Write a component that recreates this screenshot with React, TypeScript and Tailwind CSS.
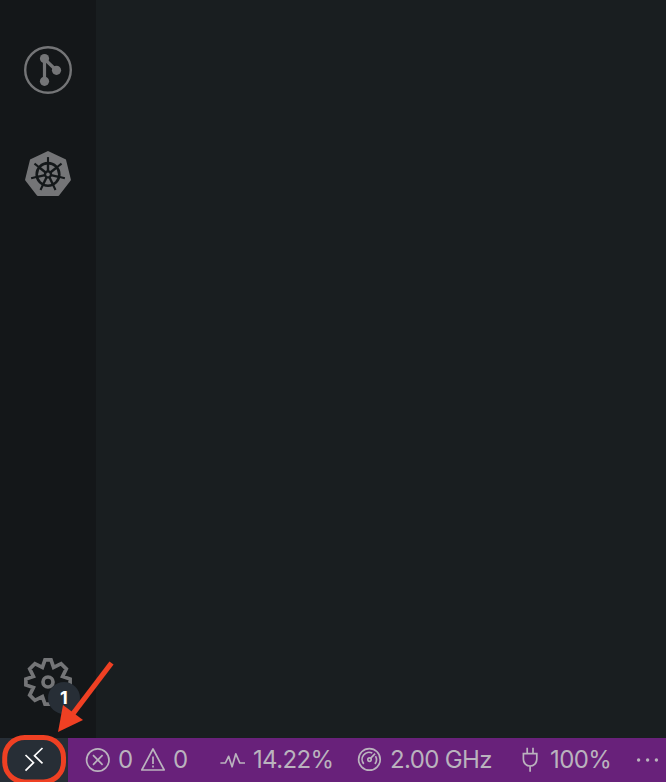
import type { ReactNode } from 'react';

const SPOKES = [0, 1, 2, 3, 4, 5, 6].map((i) => (i * 360) / 7);

function GraphIcon() {
  return (
    <svg width="48" height="48" viewBox="0 0 48 48" fill="none" stroke="#747577">
      <circle cx="24" cy="24" r="22.8" strokeWidth="2.4" />
      <path d="M20.5 13v22.5M20.5 13l12 11.5" strokeWidth="3.2" />
      <g fill="#747577" stroke="none">
        <circle cx="20.5" cy="12.5" r="4.6" />
        <circle cx="20.5" cy="35.3" r="4.6" />
        <circle cx="32.5" cy="24.3" r="4.6" />
      </g>
    </svg>
  );
}

function KubernetesIcon() {
  return (
    <svg width="48" height="48" viewBox="0 0 48 48">
      <path
        d="M24 2.2L41 10.3L45.8 29.8L34.2 44.8H13.8L2.2 29.8L7 10.3Z"
        fill="#747577"
        stroke="#747577"
        strokeWidth="2.2"
        strokeLinejoin="round"
      />
      <g stroke="#14181a" fill="none" transform="translate(24 24.4)">
        <circle r="11.3" strokeWidth="2.6" />
        {SPOKES.map((a) => (
          <g key={a} transform={`rotate(${a})`}>
            <path d="M0 -3V-11" strokeWidth="2.4" />
            <path d="M0 -11V-17.3" strokeWidth="2.1" />
          </g>
        ))}
        <circle r="3" strokeWidth="2.4" />
      </g>
    </svg>
  );
}

function GearIcon() {
  return (
    <svg width="48" height="48" viewBox="-24 -24 48 48" fill="none" stroke="#747577" strokeWidth="3.7">
      <path d="M-3-22.1H3L5.6-14.6L13.1-18.3L18.3-13.1L14.6-5.6L22.1-3V3L14.6 5.6L18.3 13.1L13.1 18.3L5.6 14.6L3 22.1H-3L-5.6 14.6L-13.1 18.3L-18.3 13.1L-14.6 5.6L-22.1 3V-3L-14.6-5.6L-18.3-13.1L-13.1-18.3L-5.6-14.6Z" />
      <circle r="5" strokeWidth="3.7" />
    </svg>
  );
}

function StatusIcon({ children, className }: { children: ReactNode; className: string }) {
  return (
    <svg
      width="26"
      height="26"
      viewBox="0 0 26 26"
      fill="none"
      stroke="currentColor"
      strokeWidth="1.7"
      className={`shrink-0 ${className}`}
    >
      {children}
    </svg>
  );
}

export default function App() {
  return (
    <div className="relative flex h-[782px] w-[666px] flex-col overflow-hidden bg-[#191e20] font-['Inter',sans-serif]">
      <div className="flex h-[738px]">
        <aside className="flex w-24 flex-col items-center bg-[#141719] pt-[46px] pb-8">
          <GraphIcon />
          <div className="mt-14">
            <KubernetesIcon />
          </div>
          <div className="relative mt-auto">
            <GearIcon />
            <span className="absolute top-6 left-6 flex size-8 items-center justify-center rounded-full bg-[#272e36] pb-[2px] text-[18px] font-bold text-white">
              1
            </span>
          </div>
        </aside>
        <main className="flex-1" />
      </div>

      <footer className="flex h-11 items-center bg-[#68217a] text-[24px] leading-none text-[#bab3be]">
        <div className="flex h-full w-[68px] shrink-0 items-center justify-center bg-[#272e36]">
          <svg width="24" height="28" viewBox="0 0 24 28" fill="none" stroke="#fff" strokeWidth="1.7">
            <path d="M3.5 9L11.5 16.7L3.5 24.7M20.5 2L12.5 9.7L20.5 17.4" />
          </svg>
        </div>
        <StatusIcon className="ml-[17px]">
          <circle cx="12.8" cy="13" r="11.2" />
          <path d="M8 8.2l9.6 9.6M17.6 8.2l-9.6 9.6" />
        </StatusIcon>
        <span className="ml-[7px] w-[15px]">0</span>
        <StatusIcon className="ml-[7px]">
          <path d="M13 2L24.2 23H1.8Z" strokeLinejoin="round" />
          <path d="M13 9.5v7.5M13 18.5v2" />
        </StatusIcon>
        <span className="ml-[7px] w-[15px]">0</span>
        <StatusIcon className="ml-[32px]">
          <path d="M.4 16h5L8.6 9.3l3.5 10.5L15.8 6.8l4 9.2h5.2" strokeLinejoin="round" />
        </StatusIcon>
        <span className="ml-[7px] w-[80px] whitespace-nowrap tracking-[-0.65px]">14.22%</span>
        <StatusIcon className="ml-[24px]">
          <circle cx="12.4" cy="12.4" r="10.8" />
          <path d="M6.8 16.9A7 7 0 0 1 15.3 6.1M18.5 9.1a7 7 0 0 1-.6 7.8M13.5 11.4l4.6-4.8" />
          <circle cx="12.5" cy="12.6" r="1.7" />
        </StatusIcon>
        <span className="ml-[7px] w-[102px] whitespace-nowrap tracking-[-0.65px]">2.00 GHz</span>
        <StatusIcon className="ml-[25px]">
          <path d="M10.2.8v5.8M16 .8v5.8M6.4 6.6h13.4v5.7a6.7 6.7 0 0 1-13.4 0ZM13.1 19v5.8" />
        </StatusIcon>
        <span className="ml-[7px] w-[62px] whitespace-nowrap tracking-[-0.6px]">100%</span>
        <svg width="24" height="6" viewBox="0 0 24 6" fill="currentColor" className="ml-[24px] shrink-0">
          <circle cx="2.6" cy="3" r="1.7" />
          <circle cx="11.6" cy="3" r="1.7" />
          <circle cx="20.4" cy="3" r="1.7" />
        </svg>
      </footer>

      <svg className="absolute bottom-0 left-0" width="130" height="137" viewBox="0 645 130 137">
        <rect x="4.7" y="737.5" width="58.8" height="44.5" rx="20" fill="none" stroke="#ef4023" strokeWidth="5" />
        <path d="M111.5 663L72 715" stroke="#ef4023" strokeWidth="5.2" />
        <path d="M58 732L63 705L83 720Z" fill="#ef4023" />
      </svg>
    </div>
  );
}
